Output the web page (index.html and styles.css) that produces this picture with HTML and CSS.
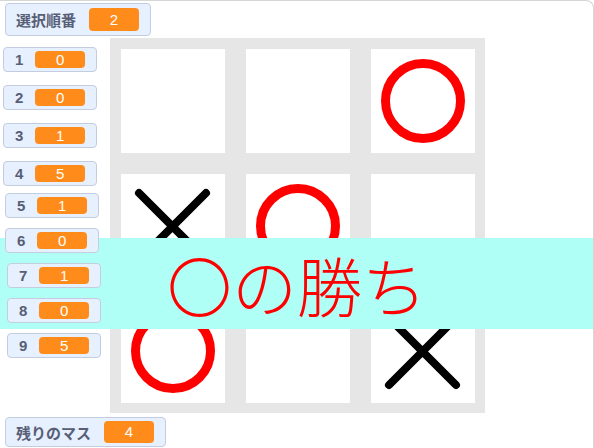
FILE: index.html
```html
<!DOCTYPE html>
<html lang="ja">
<head>
<meta charset="utf-8">
<title>Tic Tac Toe</title>
<link rel="stylesheet" href="styles.css">
</head>
<body>
<div class="stage">
  <div class="board">
    <div class="cell"></div>
    <div class="cell"></div>
    <div class="cell"><svg class="mark" viewBox="0 0 104 104"><circle cx="52" cy="52" r="37.5" class="o"/></svg></div>
    <div class="cell"><svg class="mark" viewBox="0 0 104 104"><path d="M18 19 L85 86 M85 19 L18 86" class="x"/></svg></div>
    <div class="cell"><svg class="mark" viewBox="0 0 104 104"><circle cx="52" cy="52" r="37.5" class="o"/></svg></div>
    <div class="cell"></div>
    <div class="cell"><svg class="mark" viewBox="0 0 104 104"><circle cx="52" cy="52" r="37.5" class="o"/></svg></div>
    <div class="cell"></div>
    <div class="cell"><svg class="mark" viewBox="0 0 104 104"><path d="M18 19 L85 86 M85 19 L18 86" class="x"/></svg></div>
  </div>

  <div class="banner">〇の勝ち</div>

  <div class="monitor large m-top"><span class="label">選択順番</span><span class="value">2</span></div>
  <div class="monitor small m1"><span class="label">1</span><span class="value">0</span></div>
  <div class="monitor small m2"><span class="label">2</span><span class="value">0</span></div>
  <div class="monitor small m3"><span class="label">3</span><span class="value">1</span></div>
  <div class="monitor small m4"><span class="label">4</span><span class="value">5</span></div>
  <div class="monitor small m5"><span class="label">5</span><span class="value">1</span></div>
  <div class="monitor small m6"><span class="label">6</span><span class="value">0</span></div>
  <div class="monitor small m7"><span class="label">7</span><span class="value">1</span></div>
  <div class="monitor small m8"><span class="label">8</span><span class="value">0</span></div>
  <div class="monitor small m9"><span class="label">9</span><span class="value">5</span></div>
  <div class="monitor large m-bottom"><span class="label">残りのマス</span><span class="value">4</span></div>
</div>
</body>
</html>
```

FILE: styles.css
```css
html, body {
  margin: 0;
  padding: 0;
  background: #ffffff;
}

.stage {
  position: relative;
  width: 594px;
  height: 448px;
  box-sizing: border-box;
  border-top: 1px solid #d6d6d6;
  border-right: 1px solid #d6d6d6;
  border-top-right-radius: 8px;
  overflow: hidden;
  background: #ffffff;
  padding-top: 37px;
  padding-left: 110px;
  font-family: "Liberation Sans", "Noto Sans CJK JP", sans-serif;
}

.board {
  display: grid;
  grid-template-columns: repeat(3, 104px);
  grid-template-rows: repeat(3, 104px);
  gap: 21px;
  padding: 11px 10px 10px 11px;
  width: max-content;
  background: #e6e6e6;
}

.cell {
  background: #ffffff;
}

.mark {
  display: block;
  width: 104px;
  height: 104px;
}

.o {
  fill: none;
  stroke: #ff0000;
  stroke-width: 9;
}

.x {
  fill: none;
  stroke: #000000;
  stroke-width: 8;
  stroke-linecap: round;
}

.banner {
  position: absolute;
  left: 0;
  top: 237px;
  width: 594px;
  height: 91px;
  background: #b0fff6;
  color: #ff0000;
  font-family: "Noto Sans CJK JP", sans-serif;
  font-size: 65px;
  font-weight: 300;
  line-height: 93px;
  text-align: center;
}

.monitor {
  position: absolute;
  display: flex;
  align-items: center;
  box-sizing: border-box;
  background: #e6f0ff;
  border: 1px solid #c4cde0;
  border-radius: 4px;
  color: #575e75;
  font-size: 15px;
}

.label {
  font-weight: bold;
  font-family: "Liberation Sans", "Noto Sans CJK JP", sans-serif;
}

.value {
  display: block;
  width: 50px;
  background: #ff8c1a;
  color: #ffffff;
  border-radius: 4px;
  text-align: center;
  font-size: 15px;
}

.large {
  padding: 4px 11px 4px 10px;
  gap: 13px;
}

.large .value {
  height: 23px;
  line-height: 23px;
}

.small {
  width: 94px;
  padding: 3px 11px 3px 11px;
  gap: 12px;
}

.small .value {
  height: 17px;
  line-height: 17px;
}

.m-top { left: 5px; top: 2px; }
.m1 { left: 3px; top: 46px; }
.m2 { left: 3px; top: 84px; }
.m3 { left: 3px; top: 122px; }
.m4 { left: 3px; top: 160px; }
.m5 { left: 5px; top: 192px; }
.m6 { left: 5px; top: 227px; }
.m7 { left: 7px; top: 262px; }
.m8 { left: 7px; top: 297px; }
.m9 { left: 7px; top: 332px; }
.m-bottom { left: 5px; top: 416px; padding-top: 3px; padding-bottom: 3px; }
.m-bottom .value { height: 22px; line-height: 22px; }
```
